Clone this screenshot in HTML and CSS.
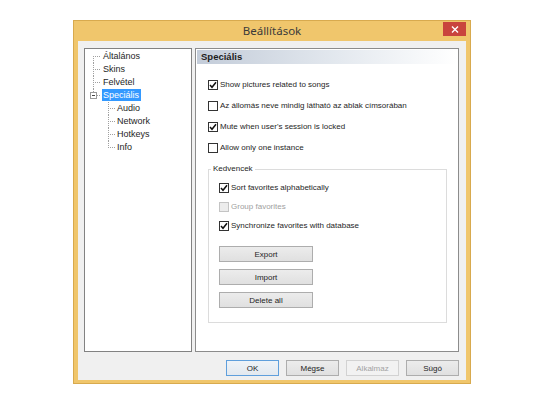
FILE: index.html
```html
<!DOCTYPE html>
<html lang="hu">
<head>
    <meta charset="UTF-8">
    <title>Beállítások</title>
    <link rel="stylesheet" href="styles.css">
</head>
<body>
    <div class="window">
        <div class="titlebar">
            <span class="title">Beállítások</span>
            <span class="close">
                <svg width="8" height="7" viewBox="0 0 8 7"><path d="M1 0.5 L7 6.5 M7 0.5 L1 6.5" stroke="#fff" stroke-width="1.4"/></svg>
            </span>
        </div>

        <div class="client">
            <div class="panes">
                <!-- bal oldali fa -->
                <ul class="tree">
                    <li class="first"><div class="row">Általános</div></li>
                    <li><div class="row">Skins</div></li>
                    <li><div class="row">Felvétel</div></li>
                    <li class="last">
                        <div class="row"><span class="toggle"></span><span class="selected">Speciális</span></div>
                        <ul>
                            <li><div class="row">Audio</div></li>
                            <li><div class="row">Network</div></li>
                            <li><div class="row">Hotkeys</div></li>
                            <li class="last"><div class="row">Info</div></li>
                        </ul>
                    </li>
                </ul>

                <div class="page">
                    <div class="page-head">Speciális</div>

                    <div class="options">
                        <div class="check on"><span class="box"><svg width="8" height="8" viewBox="0 0 8 8"><path d="M1 4 L3 6.3 L7 1.2" fill="none" stroke="#111" stroke-width="1.5"/></svg></span>Show pictures related to songs</div>
                        <div class="check"><span class="box"></span>Az állomás neve mindig látható az ablak címsorában</div>
                        <div class="check on"><span class="box"><svg width="8" height="8" viewBox="0 0 8 8"><path d="M1 4 L3 6.3 L7 1.2" fill="none" stroke="#111" stroke-width="1.5"/></svg></span>Mute when user's session is locked</div>
                        <div class="check"><span class="box"></span>Allow only one instance</div>
                    </div>

                    <fieldset class="group">
                        <legend>Kedvencek</legend>
                        <div class="group-body">
                            <div class="check small on"><span class="box"><svg width="8" height="8" viewBox="0 0 8 8"><path d="M1 4 L3 6.3 L7 1.2" fill="none" stroke="#111" stroke-width="1.5"/></svg></span>Sort favorites alphabetically</div>
                            <div class="check small disabled"><span class="box"></span>Group favorites</div>
                            <div class="check small on"><span class="box"><svg width="8" height="8" viewBox="0 0 8 8"><path d="M1 4 L3 6.3 L7 1.2" fill="none" stroke="#111" stroke-width="1.5"/></svg></span>Synchronize favorites with database</div>

                            <div class="group-buttons">
                                <button class="btn wide">Export</button>
                                <button class="btn wide">Import</button>
                                <button class="btn wide">Delete all</button>
                            </div>
                        </div>
                    </fieldset>
                </div>
            </div>

            <div class="actions">
                <button class="btn default">OK</button>
                <button class="btn">Mégse</button>
                <button class="btn" disabled>Alkalmaz</button>
                <button class="btn">Súgó</button>
            </div>
        </div>
    </div>
</body>
</html>
```

FILE: styles.css
```css
body {
    margin: 0;
    background: #fff;
    font-family: "Liberation Sans", Arial, sans-serif;
    font-size: 8px;
    color: #1e1e1e;
}

.window {
    width: 398px;
    height: 364px;
    margin: 20px 0 0 73px;
    box-sizing: border-box;
    border: 1px solid #d8aa4e;
    background: #f0c66c;
    padding: 0 4px 3px;
    display: flex;
    flex-direction: column;
}

.titlebar {
    height: 20px;
    display: grid;
    grid-template-columns: 1fr auto 1fr;
    align-items: start;
}
.title {
    grid-column: 2;
    font-family: "Noto Sans", sans-serif;
    font-size: 11.5px;
    line-height: 20px;
    color: #3a3a3a;
}
.close {
    grid-column: 3;
    justify-self: end;
    width: 23px;
    height: 14px;
    margin-top: 1px;
    background: #c9443d;
    display: flex;
    align-items: center;
    justify-content: center;
}

.client {
    flex: 1;
    background: #f0f0f0;
    padding: 7px 7px 0 6px;
    display: flex;
    flex-direction: column;
}

.panes {
    display: flex;
    gap: 3px;
    height: 304px;
}

/* fa nézet */
.tree {
    width: 108px;
    box-sizing: border-box;
    margin: 0;
    padding: 1px 0 0;
    list-style: none;
    border: 1px solid #828282;
    background: #fff;
    font-size: 9px;
}
.tree ul {
    list-style: none;
    margin: 0 0 0 -3px;
    padding: 0;
}
.tree li {
    position: relative;
    padding-left: 18px;
}
.tree ul li {
    padding-left: 17px;
}
.tree li::before {
    content: "";
    position: absolute;
    left: 8px;
    top: 6px;
    width: 7px;
    border-top: 1px dotted #a0a0a0;
}
.tree li::after {
    content: "";
    position: absolute;
    left: 8px;
    top: 0;
    bottom: 0;
    border-left: 1px dotted #a0a0a0;
}
.tree li.first::after {
    top: 6px;
}
.tree li.last::after {
    bottom: auto;
    height: 7px;
}
.tree .row {
    position: relative;
    height: 13px;
    line-height: 13px;
    white-space: nowrap;
}
.tree .toggle {
    position: absolute;
    left: -13px;
    top: 3px;
    width: 5px;
    height: 5px;
    border: 1px solid #9a9a9a;
    background: #fff;
    z-index: 1;
}
.tree .toggle::after {
    content: "";
    position: absolute;
    left: 1px;
    top: 2px;
    width: 3px;
    border-top: 1px solid #444;
}
.tree .selected {
    margin-left: -1px;
    padding: 0 2px 0 1px;
    background: #3399ff;
    color: #fff;
    display: inline-block;
    line-height: 12px;
}

/* jobb oldali lap */
.page {
    width: 264px;
    box-sizing: border-box;
    border: 1px solid #8c8c8c;
    background: #fff;
}
.page-head {
    height: 14px;
    margin: 1px;
    padding-left: 4px;
    line-height: 14px;
    font-size: 9.5px;
    font-weight: bold;
    background: linear-gradient(to right, #c3ccd9, #e4e9ef 55%, #fff);
}

.options {
    padding: 9px 0 0 12px;
}

.check {
    display: flex;
    align-items: center;
    gap: 2px;
    height: 21px;
    white-space: nowrap;
}
.check.small {
    height: 19px;
}
.check .box {
    width: 8px;
    height: 8px;
    border: 1px solid #333;
    background: #fff;
    display: flex;
    align-items: center;
    justify-content: center;
}
.check.disabled {
    color: #a0a0a0;
}
.check.disabled .box {
    border-color: #c4c4c4;
    background: #ececec;
}

.group {
    margin: 6px 11px 0 12px;
    padding: 4px 0 14px 2px;
    border: 1px solid #dcdcdc;
}
.group legend {
    padding: 0 2px;
    line-height: 10px;
}
.group-body {
    padding-left: 8px;
}
.group-buttons {
    display: flex;
    flex-direction: column;
    gap: 7px;
    margin-top: 11px;
}

.btn {
    width: 53px;
    height: 16px;
    box-sizing: border-box;
    padding: 0;
    border: 1px solid #adadad;
    background: linear-gradient(#ececec, #e0e0e0);
    font-family: inherit;
    font-size: 8px;
    color: #1e1e1e;
}
.btn.wide {
    width: 94px;
}
.btn.default {
    border-color: #5f9fdc;
    background: linear-gradient(#eef3f8, #e3e9ef);
}
.btn:disabled {
    border-color: #d2d2d2;
    background: #f2f2f2;
    color: #a3a3a3;
}

.actions {
    display: flex;
    justify-content: flex-end;
    gap: 7px;
    margin-top: 8px;
}
```
